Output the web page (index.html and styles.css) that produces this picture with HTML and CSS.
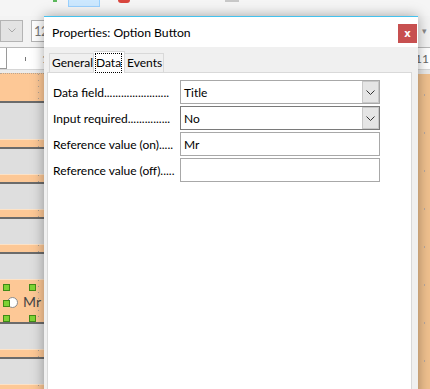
FILE: index.html
```html
<!DOCTYPE html>
<html lang="en">

<head>
    <meta charset="UTF-8">
    <meta name="viewport" content="width=device-width, initial-scale=1.0">
    <title>Properties: Option Button</title>
    <link rel="stylesheet" href="styles.css">
</head>

<body>

    <div class="app">
        <!-- main toolbar, only the bottom of it shows -->
        <div class="toolbar">
            <span class="tb-green"></span>
            <span class="tb-active"></span>
            <span class="tb-red"></span>
            <span class="tb-grey"></span>
        </div>

        <!-- formatting bar -->
        <div class="formatbar">
            <div class="combo disabled"><svg width="8" height="5" viewBox="0 0 8 5"><path d="M0.5 0.5 L4 4 L7.5 0.5" fill="none" stroke="#a8a8a8" /></svg></div>
            <div class="combo size">12</div>
            <span class="fb-arrow">&#9662;</span>
        </div>

        <div class="ruler">
            <span class="ruler-box"></span>
            <span class="tick"></span>
            <span class="ruler-num">1</span>
            <span class="ruler-num right">11</span>
        </div>

        <div class="design">
            <div class="bands">
                <div class="gap-light"></div>
                <div class="strip top"></div>
                <div class="rule"></div>
                <div class="row wide"></div>
                <div class="strip"></div>
                <div class="rule"></div>
                <div class="row"></div>
                <div class="strip"></div>
                <div class="rule"></div>
                <div class="row"></div>
                <div class="strip"></div>
                <div class="rule"></div>
                <div class="row"></div>
                <div class="strip"></div>
                <div class="rule"></div>
                <div class="row"></div>
                <div class="strip selected">
                    <span class="handle h-tl"></span>
                    <span class="handle h-tr"></span>
                    <span class="handle h-ml"></span>
                    <span class="handle h-bl"></span>
                    <span class="handle h-br"></span>
                    <span class="radio"></span>
                    <span class="radio-label">Mr</span>
                </div>
                <div class="rule"></div>
                <div class="row"></div>
                <div class="strip"></div>
                <div class="rule"></div>
                <div class="row"></div>
                <div class="strip last"></div>
            </div>
            <div class="side"></div>
        </div>
    </div>

    <div class="dialog">
        <div class="dlg-title">
            <span>Properties: Option Button</span>
            <button class="dlg-close">x</button>
        </div>
        <div class="dlg-body">
            <div class="tabs">
                <span class="tab general">General</span>
                <span class="tab data active"><span class="focus">Data</span></span>
                <span class="tab events">Events</span>
            </div>
            <div class="page">
                <div class="field">
                    <label>Data field.......................</label>
                    <div class="select">
                        <span>Title</span>
                        <span class="drop"><svg width="9" height="5" viewBox="0 0 9 5"><path d="M0.5 0.5 L4.5 4.5 L8.5 0.5" fill="none" stroke="#333" /></svg></span>
                    </div>
                </div>
                <div class="field">
                    <label>Input required...............</label>
                    <div class="select hover">
                        <span>No</span>
                        <span class="drop"><svg width="9" height="5" viewBox="0 0 9 5"><path d="M0.5 0.5 L4.5 4.5 L8.5 0.5" fill="none" stroke="#333" /></svg></span>
                    </div>
                </div>
                <div class="field">
                    <label>Reference value (on).....</label>
                    <div class="input">Mr</div>
                </div>
                <div class="field">
                    <label>Reference value (off).....</label>
                    <div class="input"></div>
                </div>
            </div>
        </div>
    </div>

</body>

</html>
```

FILE: styles.css
```css
body {
    margin: 0;
    width: 430px;
    height: 389px;
    overflow: hidden;
    position: relative;
    font-family: 'Lato', sans-serif;
    font-size: 12px;
    color: #000;
    background: #f0f0f0;
}

.app {
    display: flex;
    flex-direction: column;
    height: 389px;
}

/* toolbars */
.toolbar {
    height: 16px;
    background: #f5f5f5;
    display: flex;
    align-items: flex-start;
}

.tb-green {
    width: 4px;
    height: 2px;
    margin-left: 53px;
    background: #5cb85c;
}

.tb-active {
    width: 30px;
    height: 6px;
    margin-left: 11px;
    background: #cce8ff;
    border: 1px solid #99d1ff;
    border-top: none;
}

.tb-red {
    width: 12px;
    height: 3px;
    margin-left: 18px;
    background: #d9463e;
    border-radius: 0 0 4px 4px;
}

.tb-grey {
    width: 14px;
    height: 2px;
    margin-left: 95px;
    background: #c8c8c8;
}

.formatbar {
    height: 31px;
    background: #f3f3f3;
    display: flex;
    align-items: center;
    padding-bottom: 2px;
    box-sizing: border-box;
}

.combo {
    height: 22px;
    box-sizing: border-box;
    border: 1px solid #b4b4b4;
    display: flex;
    align-items: center;
}

.combo.disabled {
    width: 23px;
    background: #e3e3e3;
    justify-content: center;
}

.combo.size {
    width: 40px;
    margin-left: 8px;
    background: #fff;
    padding-left: 2px;
    color: #777;
    font-size: 13px;
    letter-spacing: -0.5px;
}

.fb-arrow {
    margin-left: auto;
    margin-right: 3px;
    color: #8a8a8a;
    font-size: 9px;
}

.ruler {
    height: 23px;
    box-sizing: border-box;
    border-top: 1px solid #b9b9b9;
    border-bottom: 1px solid #d6d6d6;
    background: #fff;
    display: flex;
    align-items: center;
}

.ruler-box {
    width: 7px;
    height: 100%;
    box-sizing: border-box;
    border-right: 1px solid #9a9a9a;
    border-bottom: 1px solid #9a9a9a;
}

.tick {
    width: 1px;
    height: 4px;
    margin-left: 18px;
    background: #777;
}

.ruler-num {
    margin-left: 16px;
    color: #666;
    font-size: 12px;
}

.ruler-num.right {
    margin-left: auto;
    margin-right: 1px;
}

/* design surface */
.design {
    flex: 1;
    display: flex;
    overflow: hidden;
}

.bands {
    width: 418px;
    display: flex;
    flex-direction: column;
}

.gap-light {
    height: 3px;
    background: #ececec;
}

.strip {
    height: 7px;
    background: repeating-linear-gradient(to bottom, #b0a090 0 1px, transparent 1px 6px) no-repeat 38px 0 / 1px 100%, #fdc896;
    border-top: 1px solid #fde2c6;
    position: relative;
}

.strip.top {
    height: 27px;
    border-top: 1px dotted #b9a692;
}

.strip.selected {
    height: 42px;
}

.strip.last {
    flex: 1;
}

.rule {
    height: 2px;
    background: #6b6b6b;
}

.row {
    height: 25px;
    background: #dedede;
}

.row.wide {
    height: 36px;
}

.handle {
    position: absolute;
    width: 5px;
    height: 5px;
    background: #7dd234;
    border: 1px solid #3f8a16;
    z-index: 2;
}

.h-tl { left: 3px; top: 4px; }
.h-tr { left: 29px; top: 4px; }
.h-ml { left: 3px; top: 20px; }
.h-bl { left: 3px; top: 35px; }
.h-br { left: 29px; top: 35px; }

.radio {
    position: absolute;
    left: 7px;
    top: 17px;
    width: 9px;
    height: 9px;
    border-radius: 50%;
    background: #fff;
    border: 1px solid #8c8c8c;
}

.radio-label {
    position: absolute;
    left: 23px;
    top: 13px;
    font-size: 14px;
    color: #444;
}

.side {
    flex: 1;
    background: radial-gradient(circle, #b8a8a0 0.8px, transparent 1px) 3px 2px / 7px 38px, #efc08e;
    border-top: 4px solid #e9e9e9;
}

/* properties dialog */
.dialog {
    position: absolute;
    left: 44px;
    top: 16px;
    width: 374px;
    height: 390px;
    border-top: 1px solid #45c2ee;
    background: #f0f0f0;
    box-shadow: 0 0 12px rgba(0, 0, 0, 0.35);
    display: flex;
    flex-direction: column;
}

.dlg-title {
    height: 30px;
    background: #fff;
    display: flex;
    align-items: center;
    padding-left: 8px;
    font-size: 12.2px;
}

.dlg-close {
    margin-left: auto;
    margin-right: 1px;
    margin-top: 3px;
    width: 19px;
    height: 19px;
    border: none;
    padding: 0;
    background: #c75050;
    color: #fff;
    font-family: 'DejaVu Sans', sans-serif;
    font-weight: bold;
    font-size: 10px;
    line-height: 17px;
}

.dlg-body {
    flex: 1;
    display: flex;
    flex-direction: column;
    padding: 4px 6px 0 3px;
}

.tabs {
    display: flex;
    align-items: flex-end;
    margin-left: 2px;
    position: relative;
    z-index: 1;
}

.tab {
    height: 19px;
    box-sizing: border-box;
    border: 1px solid #d9d9d9;
    border-bottom: none;
    padding-left: 2px;
    line-height: 18px;
    background: #f0f0f0;
    white-space: nowrap;
}

.tab.general { width: 45px; }
.tab.events { width: 39px; border-left: none; }

.tab.active {
    width: 31px;
    height: 22px;
    margin-bottom: -1px;
    background: #fff;
    border-left: none;
    padding-left: 1px;
    line-height: 21px;
}

.focus {
    outline: 1px dotted #000;
    outline-offset: -1px;
    padding: 2px 1px 3px;
}

.page {
    flex: 1;
    background: #fff;
    border: 1px solid #d9d9d9;
    padding: 7px 5px;
    display: flex;
    flex-direction: column;
    gap: 2px;
}

.field {
    display: flex;
    align-items: center;
    height: 24px;
}

.field label {
    width: 127px;
    white-space: nowrap;
}

.select,
.input {
    width: 200px;
    height: 24px;
    box-sizing: border-box;
    border: 1px solid #a8a8a8;
    background: #fff;
    display: flex;
    align-items: center;
    padding-left: 3px;
}

.select.hover {
    border-color: #7a7a7a;
}

.drop {
    margin-left: auto;
    width: 17px;
    height: 100%;
    box-sizing: border-box;
    border: 1px solid #c8c8c8;
    background: #e5e5e5;
    display: flex;
    align-items: center;
    justify-content: center;
}
```
